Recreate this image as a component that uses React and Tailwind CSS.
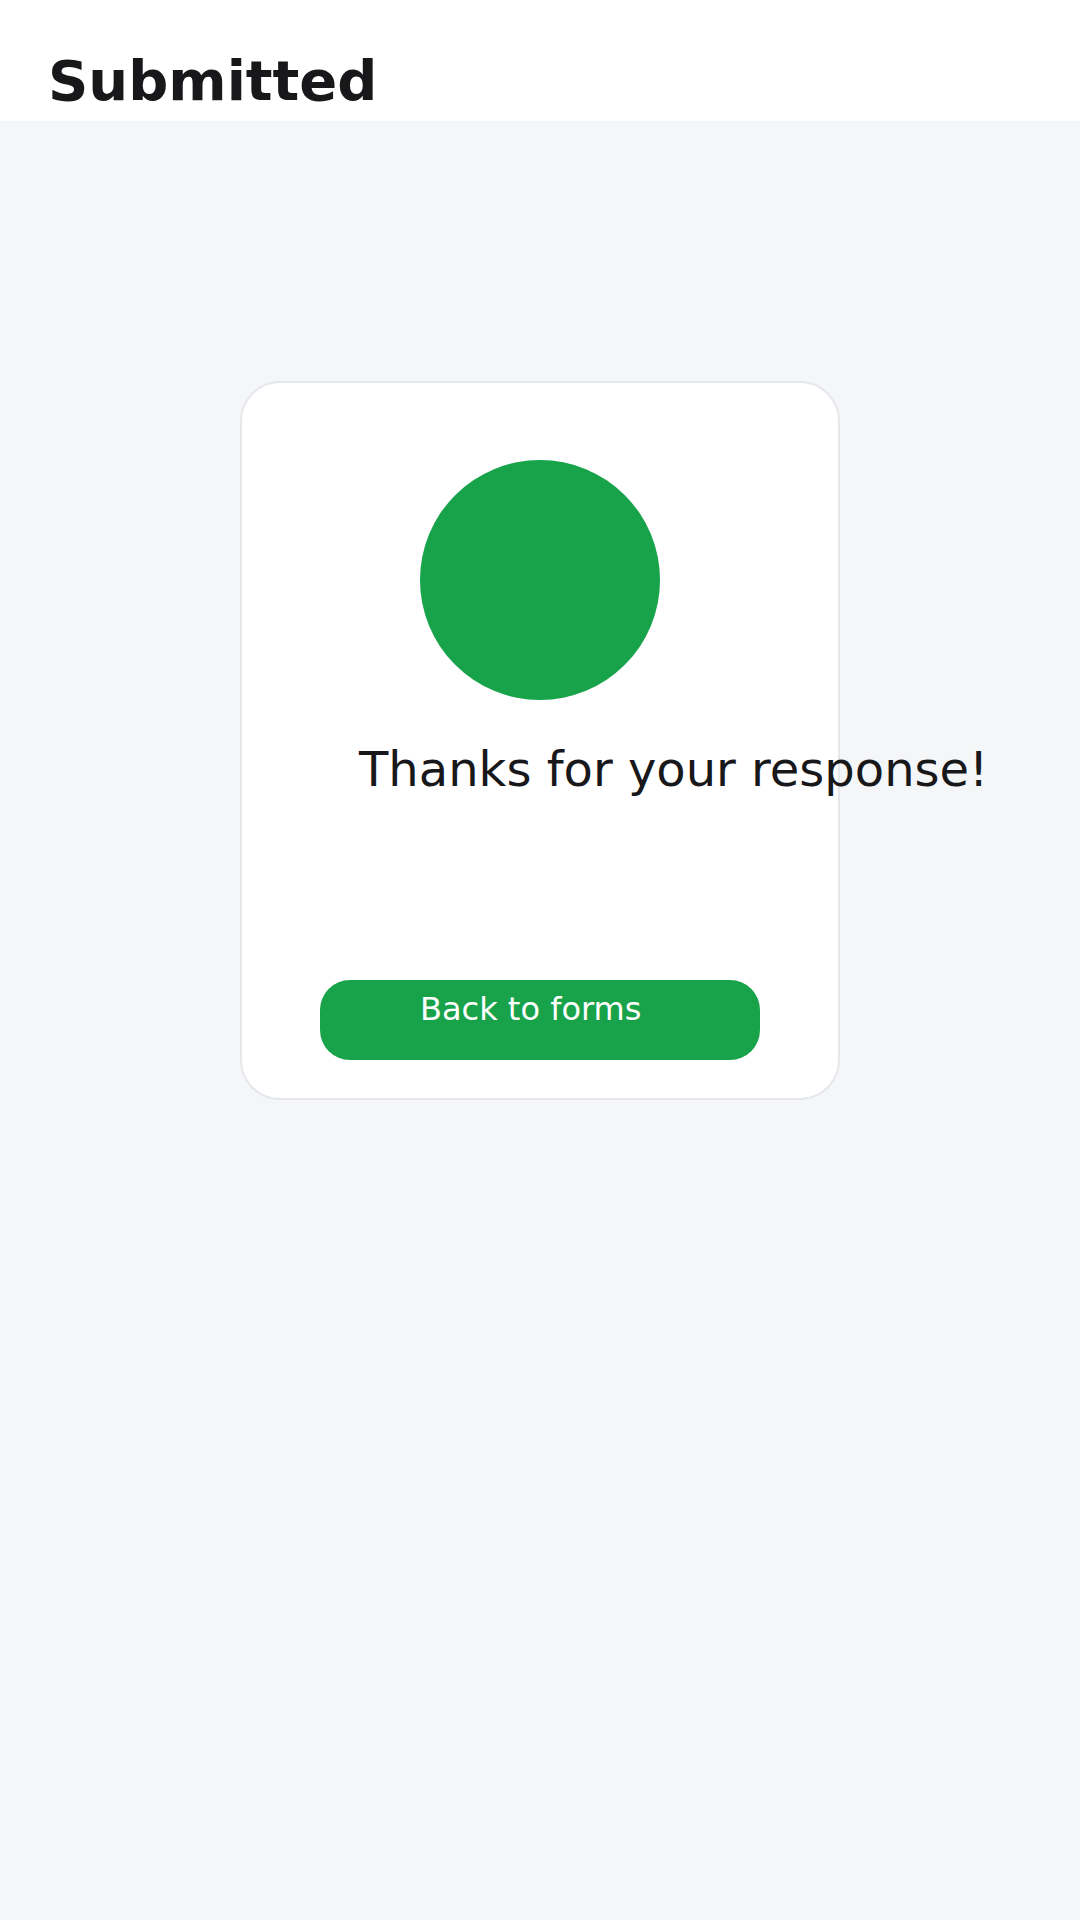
import React from 'react'

export default function App() {
  return (
    <div className="min-h-[1920px] w-[1080px] bg-[#f5f6f8] font-['DejaVu_Sans',sans-serif] text-[#18181b]">
      {/* Header */}
      <header className="h-[121px] bg-white pl-[48px] pt-[48px]">
        <h1 className="text-[56px] font-bold leading-[1.164]">Submitted</h1>
      </header>

      {/* Card */}
      <main className="flex justify-center pt-[260px]">
        <div className="w-[600px] h-[719px] rounded-[40px] border-2 border-[#e5e7eb] bg-white flex flex-col items-center pt-[77px]">
          <div className="w-[240px] h-[240px] rounded-full bg-[#18a34a]" />
          <p className="mt-[42px] w-[362px] whitespace-nowrap text-[48px] leading-[1.164]">
            Thanks for your response!
          </p>
          <button className="mt-[182px] w-[440px] h-[80px] rounded-[30px] bg-[#18a34a] text-white text-[32px] leading-[1.164] text-left pl-[100px] pt-[11px] flex items-start">
            Back to forms
          </button>
        </div>
      </main>
    </div>
  )
}
